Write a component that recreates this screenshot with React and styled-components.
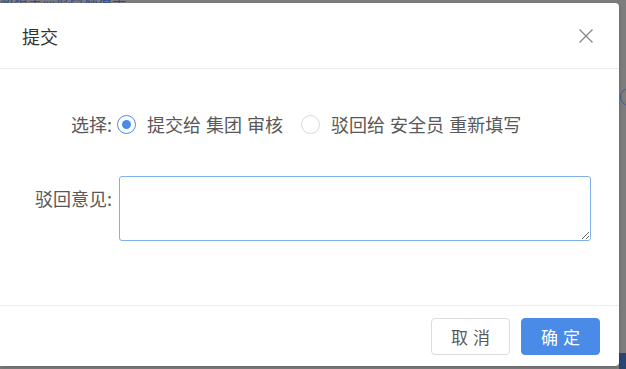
import React from 'react';
import styled, { createGlobalStyle } from 'styled-components';

const Global = createGlobalStyle`
  html, body {
    margin: 0;
    padding: 0;
    background: #7f7f7f;
    font-family: "Noto Sans CJK SC", "Noto Sans", sans-serif;
  }
`;

const Page = styled.div`
  width: 626px;
  height: 369px;
  position: relative;
  overflow: hidden;
  background: #7d7d7d;
`;

const BackText = styled.div`
  position: absolute;
  left: 0;
  top: -13px;
  font-size: 14px;
  color: #2c4f9a;
`;

const Modal = styled.div`
  position: absolute;
  left: 0;
  top: 3px;
  width: 619px;
  height: 363px;
  background: #fff;
  border-radius: 0 4px 4px 0;
  display: flex;
  flex-direction: column;
  box-shadow: 0 1px 4px rgba(0, 0, 0, 0.2);
`;

const Header = styled.div`
  height: 65px;
  display: flex;
  align-items: center;
  justify-content: space-between;
  padding: 0 25px 0 22px;
  border-bottom: 1px solid #ebebeb;
`;

const Title = styled.div`
  font-size: 18px;
  color: #333;
`;

const Close = styled.div`
  width: 16px;
  height: 16px;
  display: flex;
`;

const Body = styled.div`
  flex: 1;
  padding: 43px 28px 0 0;
  display: flex;
  flex-direction: column;
  gap: 40px;
`;

const Row = styled.div`
  display: flex;
  align-items: ${p => (p.$top ? 'flex-start' : 'center')};
  height: ${p => (p.$top ? 'auto' : '24px')};
`;

const Label = styled.div`
  width: 117px;
  text-align: right;
  font-size: 18px;
  line-height: 26px;
  color: #595959;
  padding-right: 5px;
  box-sizing: border-box;
  padding-top: ${p => p.$pt || 0}px;
`;

const Radio = styled.span`
  width: 19px;
  height: 19px;
  border-radius: 50%;
  border: 1px solid ${p => (p.$on ? '#4a8be8' : '#d9d9d9')};
  display: inline-flex;
  align-items: center;
  justify-content: center;
  box-sizing: border-box;
  margin-right: 11px;
  &::after {
    content: '';
    width: 9px;
    height: 9px;
    border-radius: 50%;
    background: ${p => (p.$on ? '#4a8be8' : 'transparent')};
  }
`;

const Option = styled.label`
  display: flex;
  align-items: center;
  font-size: 18px;
  color: #595959;
  margin-right: 18px;
  word-spacing: 1px;
`;

const TextArea = styled.textarea`
  width: 472px;
  height: 65px;
  margin-left: 2px;
  box-sizing: border-box;
  border: 1px solid #7fb0f0;
  border-radius: 3px;
  outline: none;
  font-family: inherit;
`;

const Footer = styled.div`
  height: 60px;
  border-top: 1px solid #ebebeb;
  display: flex;
  justify-content: flex-end;
  align-items: center;
  gap: 11px;
  padding-right: 19px;
`;

const Button = styled.button`
  width: 79px;
  height: 37px;
  border-radius: 4px;
  font-size: 17px;
  letter-spacing: 5px;
  text-indent: 5px;
  font-family: inherit;
  cursor: pointer;
  border: 1px solid ${p => (p.$primary ? '#4a8be8' : '#dcdcdc')};
  background: ${p => (p.$primary ? '#4a8be8' : '#fff')};
  color: ${p => (p.$primary ? '#fff' : '#595959')};
`;

const SideBits = styled.div`
  position: absolute;
  right: 0;
  top: 0;
  width: 7px;
  height: 369px;
`;

const SideCircle = styled.div`
  position: absolute;
  left: 1px;
  top: 88px;
  width: 16px;
  height: 16px;
  border-radius: 50%;
  border: 1px solid #3d5a8f;
`;

const SideBar = styled.div`
  position: absolute;
  left: 0;
  bottom: 0;
  width: 7px;
  height: 16px;
  background: #2b4573;
`;

export default function App() {
  return (
    <Page>
      <Global />
      <BackText>新增重点危险源清单</BackText>
      <SideBits>
        <SideCircle />
        <SideBar />
      </SideBits>
      <Modal>
        <Header>
          <Title>提交</Title>
          <Close>
            <svg width="16" height="16" viewBox="0 0 16 16">
              <path d="M1.5 1.5 L14.5 14.5 M14.5 1.5 L1.5 14.5" stroke="#888" strokeWidth="1.4" fill="none" />
            </svg>
          </Close>
        </Header>
        <Body>
          <Row>
            <Label>选择:</Label>
            <Option>
              <Radio $on />提交给 集团 审核
            </Option>
            <Option>
              <Radio />驳回给 安全员 重新填写
            </Option>
          </Row>
          <Row $top>
            <Label $pt={9}>驳回意见:</Label>
            <TextArea />
          </Row>
        </Body>
        <Footer>
          <Button>取消</Button>
          <Button $primary>确定</Button>
        </Footer>
      </Modal>
    </Page>
  );
}
